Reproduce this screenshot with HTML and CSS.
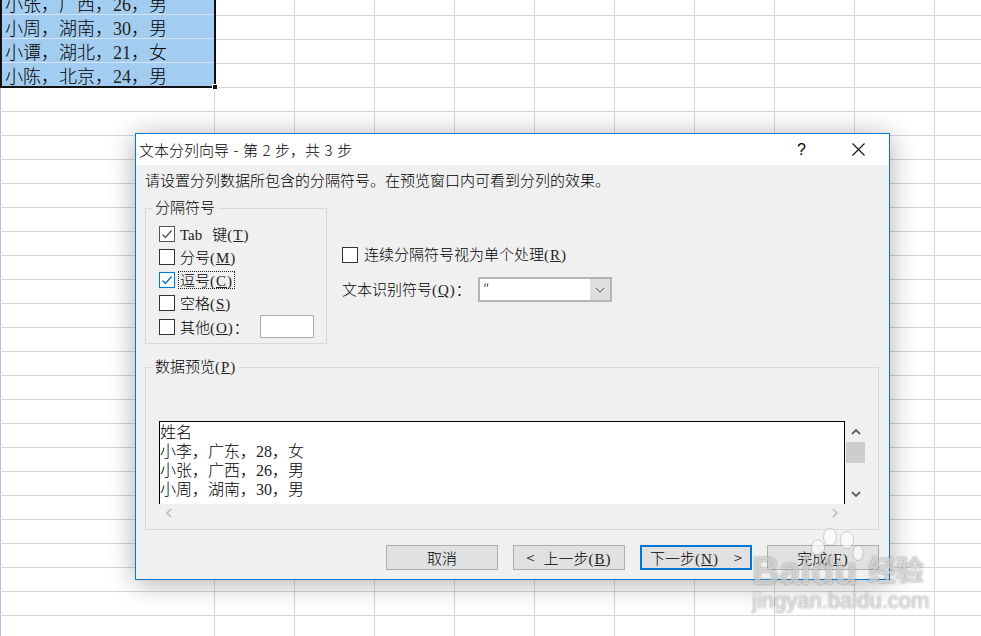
FILE: index.html
```html
<!DOCTYPE html>
<html lang="zh-CN">
<head>
<meta charset="utf-8">
<title>文本分列向导</title>
<link rel="stylesheet" href="styles.css">
</head>
<body>
<main class="sheet">
  <div class="selection">
    <div class="cell">小张，广西，<span class="num">26</span>，男</div>
    <div class="cell">小周，湖南，<span class="num">30</span>，男</div>
    <div class="cell">小谭，湖北，<span class="num">21</span>，女</div>
    <div class="cell">小陈，北京，<span class="num">24</span>，男</div>
    <span class="handle"></span>
  </div>

  <section class="dialog">
    <header class="titlebar">
      <span class="title">文本分列向导 - 第 2 步，共 3 步</span>
      <span class="help">?</span>
      <svg class="close" viewBox="0 0 13 13"><path d="M0.5 0.5 12.5 12.5M12.5 0.5 0.5 12.5"/></svg>
    </header>
    <div class="body">
      <p class="prompt">请设置分列数据所包含的分隔符号。在预览窗口内可看到分列的效果。</p>
      <div class="options">
        <fieldset class="group delimiters">
          <legend>分隔符号</legend>
          <div class="rows">
            <div class="row">
              <span class="box box-gray"><svg viewBox="0 0 14 14"><path d="M2.5 7.5 5.5 10.5 11.5 3.5"/></svg></span>
              <span class="label"><span class="num">Tab</span><span class="tabkey">键</span><span class="m">(<u>T</u>)</span></span>
            </div>
            <div class="row">
              <span class="box"></span>
              <span class="label">分号<span class="m">(<u>M</u>)</span></span>
            </div>
            <div class="row">
              <span class="box box-blue"><svg viewBox="0 0 14 14"><path d="M2.5 7.5 5.5 10.5 11.5 3.5"/></svg></span>
              <span class="label label-focus">逗号<span class="m">(<u>C</u>)</span></span>
            </div>
            <div class="row">
              <span class="box"></span>
              <span class="label">空格<span class="m">(<u>S</u>)</span></span>
            </div>
            <div class="row row-other">
              <span class="box"></span>
              <span class="label">其他<span class="m">(<u>O</u>)</span>：</span>
              <span class="other-input"></span>
            </div>
          </div>
        </fieldset>
        <div class="side">
          <div class="side-check">
            <span class="box"></span>
            <span class="side-label">连续分隔符号视为单个处理<span class="m">(<u>R</u>)</span></span>
          </div>
          <div class="qualifier">
            <span class="qualifier-label">文本识别符号<span class="m">(<u>Q</u>)</span>：</span>
            <div class="select">
              <span class="select-value">″</span>
              <span class="select-arrow"><svg viewBox="0 0 12 7"><path d="M1 1 6 6 11 1"/></svg></span>
            </div>
          </div>
        </div>
      </div>

      <fieldset class="group preview">
        <legend>数据预览<span class="m">(<u>P</u>)</span></legend>
        <div class="preview-grid">
          <div class="list">
            <div class="list-row">姓名</div>
            <div class="list-row">小李，广东，<span class="num">28</span>，女</div>
            <div class="list-row">小张，广西，<span class="num">26</span>，男</div>
            <div class="list-row">小周，湖南，<span class="num">30</span>，男</div>
          </div>
          <div class="vscroll">
            <span class="vbtn"><svg viewBox="0 0 10 7"><path d="M1 6 5 2 9 6"/></svg></span>
            <span class="thumb"></span>
            <span class="vbtn vbtn-down"><svg viewBox="0 0 10 7"><path d="M1 1 5 5 9 1"/></svg></span>
          </div>
          <div class="hscroll">
            <svg viewBox="0 0 7 10"><path d="M6 1 2 5 6 9"/></svg>
            <svg viewBox="0 0 7 10"><path d="M1 1 5 5 1 9"/></svg>
          </div>
        </div>
      </fieldset>

      <div class="actions">
        <button class="btn" type="button">取消</button>
        <button class="btn btn-split" type="button"><span>&lt;</span><span>上一步<span class="m">(<u>B</u>)</span></span></button>
        <button class="btn btn-split btn-default" type="button"><span>下一步<span class="m">(<u>N</u>)</span></span><span>&gt;</span></button>
        <button class="btn" type="button">完成<span class="m">(<u>F</u>)</span></button>
      </div>
    </div>
  </section>

  <div class="watermark">
    <svg class="paw" viewBox="0 0 60 50">
      <ellipse cx="8" cy="20" rx="6.5" ry="8"/>
      <ellipse cx="20" cy="9" rx="6.5" ry="8.5"/>
      <ellipse cx="37" cy="12" rx="6.5" ry="8.5"/>
      <ellipse cx="48" cy="25" rx="5" ry="7.5"/>
    </svg>
    <span class="wm-logo">Baidu</span>
    <span class="wm-cn">经验</span>
    <span class="wm-url">jingyan.baidu.com</span>
  </div>
</main>
</body>
</html>
```
FILE: styles.css
```css
* { box-sizing: border-box; }

html, body { margin: 0; padding: 0; }

body {
  font-family: "Noto Sans CJK SC", "Liberation Sans", sans-serif;
  font-size: 15px;
  font-weight: 300;
  color: #000;
  overflow: hidden;
}

.sheet {
  position: relative;
  width: 981px;
  height: 636px;
  overflow: hidden;
  background-color: #fff;
  background-image:
    repeating-linear-gradient(to right, #d6d6d6 0 1px, transparent 1px 80px),
    linear-gradient(to bottom, #d6d6d6 1px, transparent 1px),
    linear-gradient(to bottom, #a9bfdc, #a9bfdc);
  background-size: 767px 100%, 100% 24px, 1px 100%;
  background-position: 214px 0, 0 15px, 0 0;
  background-repeat: no-repeat, repeat-y, no-repeat;
}

.selection {
  position: relative;
  width: 216px;
  height: 97px;
  margin-top: -9px;
  background: #a3cdf0;
  border-left: 2px solid #111;
  border-right: 2px solid #111;
  border-bottom: 2px solid #111;
  font-size: 18px;
}

.cell {
  height: 24px;
  padding-left: 3px;
  line-height: 24px;
  border-bottom: 1px solid #d3e3f2;
  white-space: nowrap;
}

.cell:nth-child(4) { border-bottom: 0; }

.num {
  color: #222;
  font-family: "Liberation Serif", serif;
  font-weight: 400;
  line-height: 0;
}

.handle {
  position: absolute;
  right: -4px;
  bottom: -4px;
  width: 6px;
  height: 6px;
  background: #111;
  border: 1px solid #fff;
}

.dialog {
  position: absolute;
  left: 135px;
  top: 133px;
  width: 755px;
  height: 447px;
  background: #f0f0f0;
  border: 1px solid #0078d7;
  box-shadow: 0 3px 26px rgba(0, 0, 0, 0.32);
}

.titlebar {
  display: flex;
  align-items: center;
  height: 31px;
  padding-left: 3px;
  background: #fff;
  white-space: nowrap;
}

.title {
  flex: 1;
  word-spacing: 1.2px;
}

.help {
  margin-right: 46px;
  font-family: "Liberation Sans", sans-serif;
  font-size: 16px;
  font-weight: 400;
}

.close {
  width: 13px;
  height: 13px;
  margin-right: 24px;
}

.close path {
  fill: none;
  stroke: #111;
  stroke-width: 1.1;
}

.body { padding: 0 10px 0 9px; }

.prompt {
  height: 33px;
  margin: 0;
  line-height: 30px;
  white-space: nowrap;
}

.m {
  color: #222;
  font-family: "Liberation Serif", serif;
  font-weight: 400;
  letter-spacing: 1px;
  line-height: 0;
  white-space: pre;
}

.options { display: flex; }

.group {
  min-width: 0;
  margin: 0;
  padding: 0;
  border: 1px solid #d9d9d9;
}

.group legend {
  height: 20px;
  margin-left: 6px;
  padding: 0 3px;
  line-height: 18px;
  white-space: nowrap;
}

.delimiters {
  width: 182px;
  height: 146px;
}

.rows { padding: 5px 0 0 13px; }

.row {
  display: flex;
  align-items: center;
  height: 22px;
  margin-bottom: 1px;
}

.row-other {
  height: 23px;
  margin-top: 1px;
  margin-bottom: 0;
}

.row-other .box { margin-top: 1px; }

.box {
  flex: none;
  width: 16px;
  height: 16px;
  background: #fff;
  border: 1px solid #333;
}

.box svg {
  display: block;
  width: 14px;
  height: 14px;
}

.box path {
  fill: none;
  stroke-width: 1.4;
}

.box-gray { border-color: #555; }
.box-gray path { stroke: #555; }
.box-blue { border-color: #0078d7; }
.box-blue path { stroke: #0078d7; }

.label {
  margin-left: 3px;
  padding: 0 1px;
  border: 1px dotted transparent;
  line-height: 16px;
  white-space: nowrap;
}

.label-focus { border-color: #222; }

.tabkey { margin-left: 10px; }

.other-input {
  width: 54px;
  height: 23px;
  margin-left: 9px;
  background: #fff;
  border: 1px solid #adadad;
}

.side {
  margin-left: 15px;
  padding-top: 49px;
}

.side-check {
  display: flex;
  align-items: center;
  height: 16px;
}

.side-label {
  margin-left: 6px;
  margin-bottom: 2px;
  line-height: 16px;
  white-space: nowrap;
}

.qualifier {
  display: flex;
  align-items: center;
  margin-top: 14px;
  white-space: nowrap;
}

.qualifier-label {
  width: 136px;
  margin-bottom: 2px;
}

.select {
  display: flex;
  width: 134px;
  height: 25px;
  background: #fff;
  border: 2px solid #b4b4b4;
}

.select-value {
  flex: 1;
  padding-left: 3px;
  line-height: 20px;
}

.select-arrow {
  display: flex;
  align-items: center;
  justify-content: center;
  width: 20px;
  background: #dedede;
}

.select-arrow svg {
  width: 10px;
  height: 6px;
}

.select-arrow path {
  fill: none;
  stroke: #555;
  stroke-width: 1.2;
}

.preview {
  height: 173px;
  margin-top: 13px;
}

.preview-grid {
  display: grid;
  grid-template-columns: 686px 20px;
  grid-template-rows: 83px 18px;
  padding: 44px 0 0 13px;
}

.list {
  background: #fff;
  border: 1px solid #000;
  border-bottom: 0;
  font-size: 16px;
  overflow: hidden;
  white-space: nowrap;
}

.list-row {
  height: 19px;
  line-height: 19px;
}

.vscroll {
  display: flex;
  flex-direction: column;
  padding-left: 1px;
}

.vbtn {
  display: flex;
  align-items: center;
  justify-content: center;
  height: 21px;
}

.vbtn svg {
  width: 10px;
  height: 7px;
}

.vbtn path {
  fill: none;
  stroke: #606060;
  stroke-width: 1.8;
}

.vbtn-down {
  margin-top: auto;
  padding-top: 2px;
}

.thumb {
  height: 21px;
  background: #cdcdcd;
}

.hscroll {
  display: flex;
  align-items: center;
  justify-content: space-between;
  padding: 0 6px;
}

.hscroll svg {
  width: 7px;
  height: 10px;
}

.hscroll path {
  fill: none;
  stroke: #c4c4c4;
  stroke-width: 1.8;
}

.actions {
  display: flex;
  justify-content: flex-end;
  gap: 15px;
  margin-top: 15px;
}

.btn {
  width: 112px;
  height: 25px;
  padding: 0;
  background: #e1e1e1;
  border: 1px solid #adadad;
  font: inherit;
  color: #000;
  white-space: nowrap;
}

.btn-split {
  display: flex;
  align-items: center;
  justify-content: center;
  gap: 9px;
}

.btn-default {
  gap: 15px;
  border: 2px solid #0078d7;
}

.watermark {
  position: absolute;
  left: 752px;
  top: 528px;
  width: 180px;
  height: 90px;
  color: rgba(255, 255, 255, 0.6);
  text-shadow: 0 0 2px rgba(0, 0, 0, 0.45);
  font-family: "Liberation Sans", sans-serif;
  white-space: nowrap;
}

.paw {
  position: absolute;
  left: 58px;
  top: 0;
  width: 60px;
  height: 50px;
}

.paw ellipse {
  fill: rgba(255, 255, 255, 0.65);
  stroke: rgba(0, 0, 0, 0.16);
}

.wm-logo {
  position: absolute;
  left: 0;
  top: 22px;
  font-size: 38px;
  font-weight: 700;
}

.wm-cn {
  position: absolute;
  left: 116px;
  top: 21px;
  font-family: "Noto Sans CJK SC", sans-serif;
  font-size: 28px;
  font-weight: 700;
}

.wm-url {
  position: absolute;
  left: 0;
  top: 60px;
  font-size: 22px;
}
```
